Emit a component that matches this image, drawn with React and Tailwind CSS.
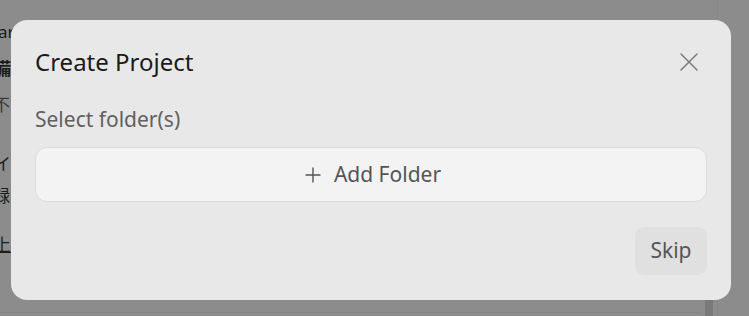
import React from "react";
import { X, Plus } from "lucide-react";

// faded page behind the dialog
const Backdrop = () => (
  <div className="absolute inset-0 bg-[#8c8c8c] overflow-hidden">
    <div className="flex flex-col text-[#1c1c1c] text-[17px] leading-none font-['Noto_Sans','Noto_Sans_CJK_JP',sans-serif]">
      <span className="mt-[23px] ml-[-2px]">ar</span>
      <span className="mt-[20px] ml-[-6px] font-bold">備</span>
      <span className="mt-[19px] ml-[-7px] text-[#3a3a3a]">不</span>
      <span className="mt-[42px] ml-[-6px]">イ</span>
      <span className="mt-[15px] ml-[-7px]">録</span>
      <span className="mt-[32px] ml-[-6px] underline">上</span>
    </div>
    <div className="absolute left-[705px] top-[300px] w-[8px] h-[20px] bg-[#7a7a7a]" />
    <div className="absolute left-[717px] top-0 w-px h-full bg-[#858585]" />
    <div className="absolute left-0 top-[312px] w-[700px] h-px bg-[#848484]" />
  </div>
);

export default function App() {
  return (
    <div className="relative w-[749px] h-[316px] overflow-hidden font-['Noto_Sans',sans-serif]">
      <Backdrop />
      <div className="absolute left-[11px] top-[20px] w-[720px] h-[280px] rounded-[16px] bg-[#e8e8e8] px-[24px] flex flex-col">
        <div className="flex items-center justify-between pt-[26px]">
          <h2 className="text-[24px] leading-[32px] text-[#1a1a1a]">Create Project</h2>
          <button className="text-[#7a7a7a] mr-[2px]">
            <X size={32} strokeWidth={1.1} />
          </button>
        </div>
        <p className="mt-[27px] text-[21px] leading-[28px] text-[#616161]">Select folder(s)</p>
        <button className="mt-[14px] h-[55px] w-full rounded-[12px] bg-[#f3f3f3] border border-[#dcdcdc] flex items-center justify-center gap-[9px] text-[#555555]">
          <Plus size={24} strokeWidth={1.4} />
          <span className="text-[21px]">Add Folder</span>
        </button>
        <div className="flex justify-end mt-[25px]">
          <button className="w-[72px] h-[48px] rounded-[9px] bg-[#e0e0e0] text-[21px] text-[#555555]">Skip</button>
        </div>
      </div>
    </div>
  );
}
